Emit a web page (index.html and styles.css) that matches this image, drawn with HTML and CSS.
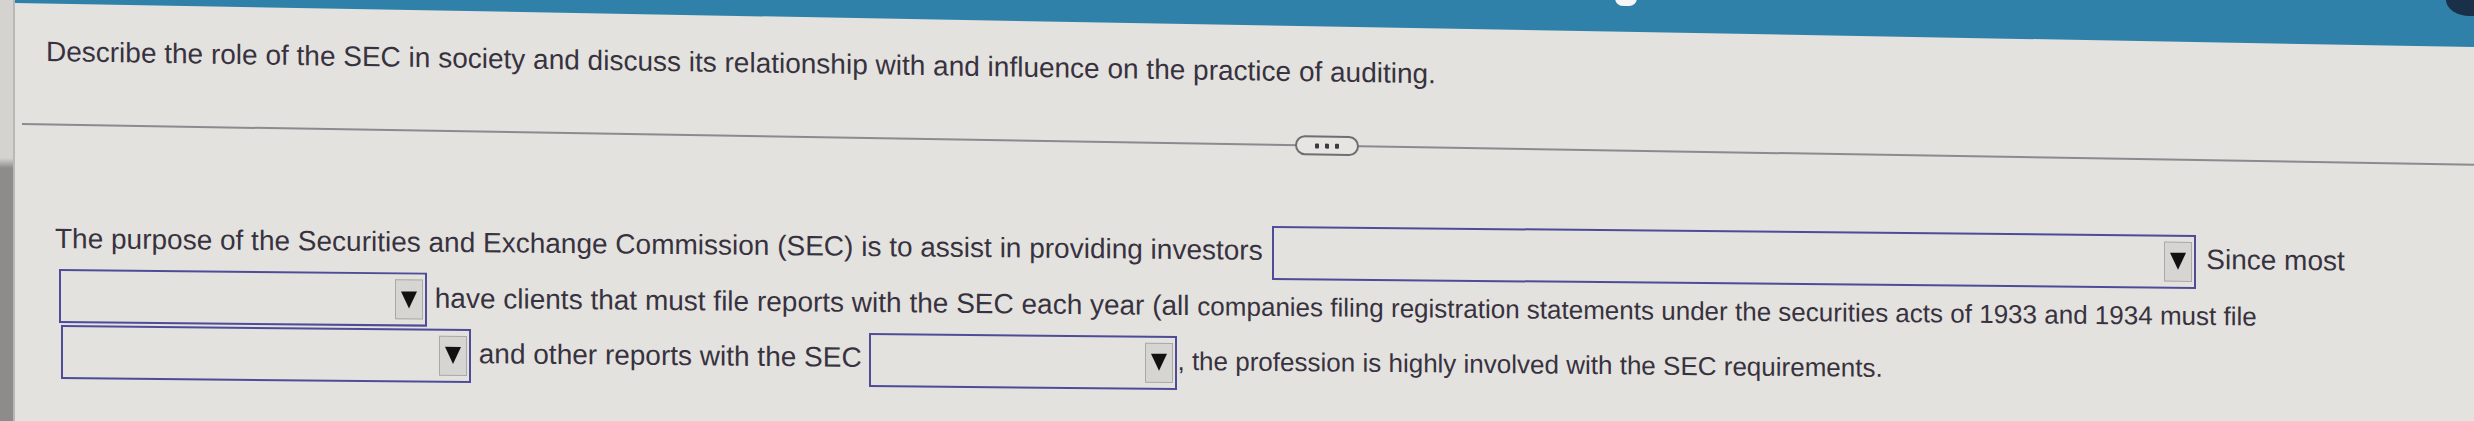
FILE: index.html
```html
<!DOCTYPE html>
<html lang="en">
<head>
<meta charset="utf-8">
<title>SEC question</title>
<link rel="stylesheet" href="styles.css">
</head>
<body>
<div class="screen">
  <div class="edge"></div>
  <div class="main">
    <div class="topbar"><span class="knob"></span><span class="corner"></span></div>
    <div class="panel">
      <p class="question">Describe the role of the SEC in society and discuss its relationship with and influence on the practice of auditing.</p>
      <div class="divider"><span class="more"><i></i><i></i><i></i></span></div>
      <p class="answer">The purpose of the Securities and Exchange Commission (SEC) is to assist in providing investors <span class="select s1"><span class="arrow"></span></span> Since most <span class="select s2"><span class="arrow"></span></span> have clients that must file reports with the SEC each year (all <span class="far">companies filing registration statements under the securities acts of 1933 and 1934 must file</span> <span class="select s3"><span class="arrow"></span></span> and other reports with the SEC <span class="select s4"><span class="arrow"></span></span><span class="far">, the profession is highly involved with the SEC requirements.</span></p>
    </div>
  </div>
</div>
</body>
</html>
```

FILE: styles.css
```css
html, body {
  margin: 0;
  padding: 0;
}
body {
  width: 2474px;
  height: 421px;
  overflow: hidden;
  background: #e3e2de;
  font-family: "Liberation Sans", Arial, sans-serif;
  color: #383240;
}
.screen {
  display: flex;
  height: 421px;
}
.edge {
  width: 13px;
  flex: none;
  background: linear-gradient(to bottom, #d4d3cf 0, #d4d3cf 158px, #8d8c8a 168px, #8d8c8a 100%);
  border-right: 2px solid #b9b8b4;
}
.main {
  flex: 1;
  display: flex;
  flex-direction: column;
}
.topbar {
  height: 48px;
  flex: none;
  background: #3081aa;
  clip-path: polygon(0 0, 100% 0, 100% 47px, 0 3px);
  border-bottom: 2px solid #24506a;
  display: flex;
  justify-content: space-between;
  padding-left: 1600px;
}
.knob {
  width: 22px;
  height: 8px;
  margin-top: -2px;
  border-radius: 0 0 11px 11px;
  background: #f4f6f8;
}
.corner {
  width: 28px;
  height: 16px;
  border-radius: 0 0 0 24px / 0 0 0 16px;
  background: #1a2f48;
}
.panel {
  margin-top: -47px;
  display: flex;
  flex-direction: column;
}
.question {
  margin: 33px 0 0 31px;
  font-size: 28px;
  line-height: 32px;
  white-space: nowrap;
  transform: skewY(0.92deg);
  transform-origin: 0 0;
}
.divider {
  margin: 55px 0 0 7px;
  height: 2px;
  background: #8b8a8e;
  transform: skewY(0.95deg);
  transform-origin: 0 0;
  display: flex;
  align-items: center;
  padding-left: 1273px;
}
.more {
  width: 60px;
  height: 16px;
  border: 2px solid #6f6e74;
  border-radius: 10px;
  background: #e6e5e1;
  display: flex;
  justify-content: center;
  align-items: center;
  gap: 6px;
}
.more i {
  width: 4px;
  height: 5px;
  background: #3c3944;
  border-radius: 1px;
}
.answer {
  margin: 87px 0 0 40px;
  width: 2325px;
  font-size: 28px;
  line-height: 54px;
  transform: skewY(0.56deg);
  transform-origin: 0 0;
}
.far {
  font-size: 26px;
}
.select {
  display: inline-flex;
  justify-content: flex-end;
  align-items: center;
  height: 54px;
  box-sizing: border-box;
  border: 2px solid #4e4c98;
  vertical-align: middle;
  padding-right: 2px;
}
.s1 { width: 924px; margin-left: 2px; margin-right: 2px; }
.s2 { width: 368px; margin-left: 4px; }
.s3 { width: 410px; margin-left: 6px; }
.s4 { width: 308px; }
.arrow {
  width: 28px;
  height: 40px;
  box-sizing: border-box;
  background: #d6d5d2;
  border: 1px solid #aaa9a6;
  display: flex;
  align-items: center;
  justify-content: center;
}
.arrow::before {
  content: "";
  border-left: 8px solid transparent;
  border-right: 8px solid transparent;
  border-top: 17px solid #111;
}
```
